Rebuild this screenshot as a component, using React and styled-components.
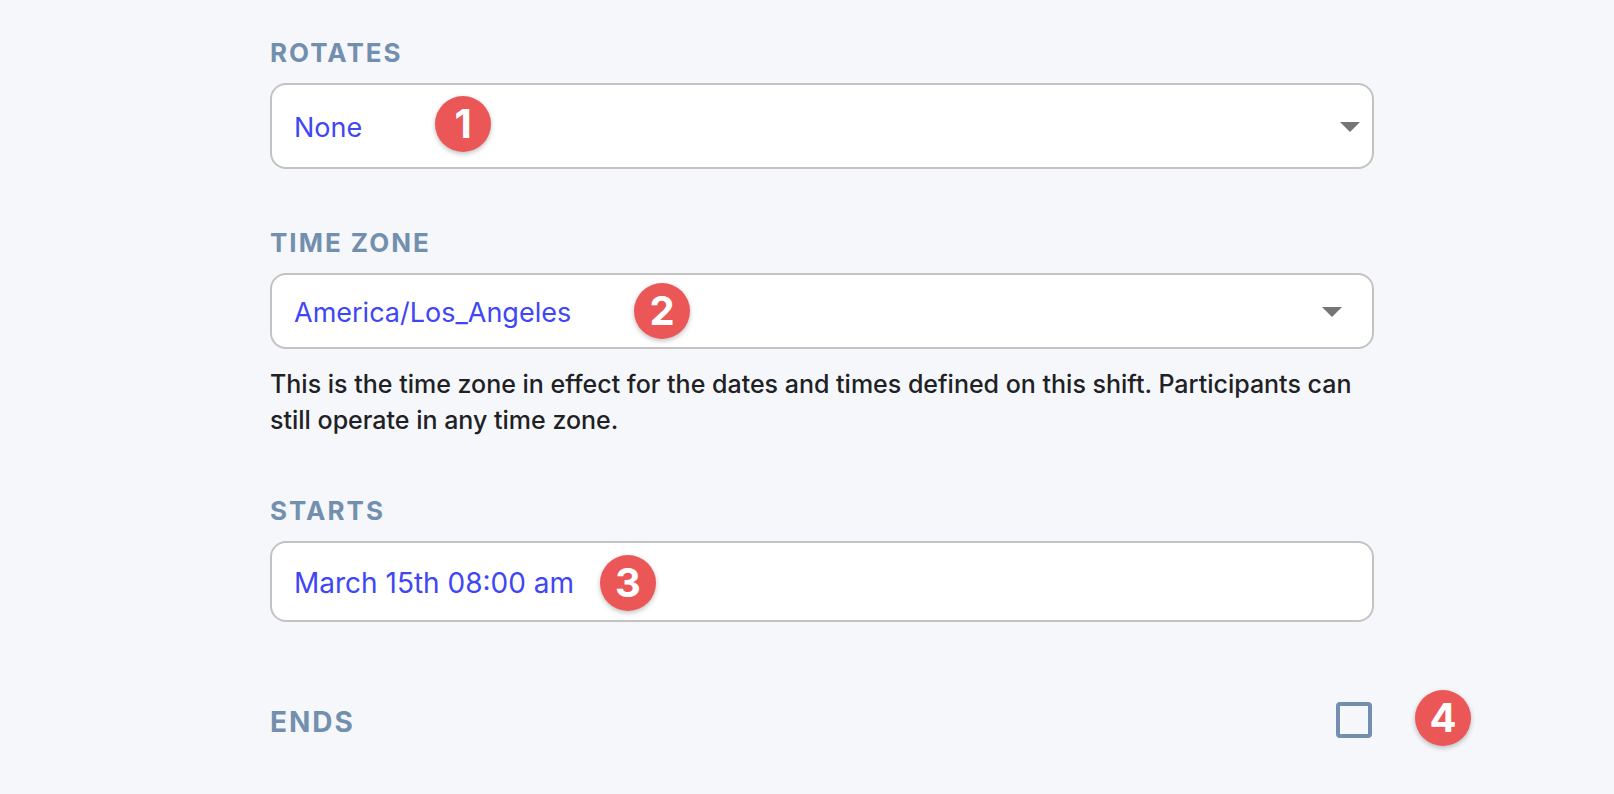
import React from "react";
import styled, { createGlobalStyle, css } from "styled-components";

const GlobalStyle = createGlobalStyle`
  *, *::before, *::after { box-sizing: border-box; }
  body {
    margin: 0;
    background: #f6f7fb;
    font-family: Inter, "Liberation Sans", sans-serif;
  }
`;

const Form = styled.form`
  display: flex;
  flex-direction: column;
  gap: 58px;
  padding: 37px 240px 56px 270px;
`;

const Field = styled.div`
  display: flex;
  flex-direction: column;
`;

const Label = styled.label`
  margin-bottom: ${(p) => (p.$inline ? "0" : "14px")};
  padding-top: ${(p) => (p.$inline ? "4px" : "0")};
  color: #738fae;
  font-size: ${(p) => (p.$inline ? "28px" : "26px")};
  font-weight: 700;
  line-height: 32px;
  letter-spacing: 2px;
  text-transform: uppercase;
`;

const Control = styled.div`
  position: relative;
  display: flex;
  align-items: center;
  height: ${(p) => p.$height}px;
`;

const inputStyles = css`
  appearance: none;
  width: 100%;
  height: 100%;
  margin: 0;
  padding: 2px 22px 0;
  border: 2px solid #c3c3c3;
  border-radius: 16px;
  background: #fff;
  color: #3f46f5;
  font-family: inherit;
  font-weight: 400;
  outline: none;
`;

const Select = styled.select`
  ${inputStyles}
  font-size: 27px;
`;

const TextInput = styled.input`
  ${inputStyles}
  font-size: 28px;
`;

const Arrow = styled.svg`
  position: absolute;
  top: 50%;
  right: ${(p) => p.$right}px;
  width: 20px;
  height: 10px;
  margin-top: -4px;
  fill: #757575;
  pointer-events: none;
`;

const Help = styled.p`
  margin: 17px 0 -1px;
  color: #202124;
  font-size: 25px;
  font-weight: 500;
  line-height: 36px;
`;

const ToggleRow = styled.div`
  position: relative;
  display: flex;
  align-items: center;
  justify-content: space-between;
  margin-top: 22px;
  padding-right: 2px;
`;

const Checkbox = styled.input`
  appearance: none;
  width: 36px;
  height: 36px;
  margin: 0;
  border: 4px solid #738fae;
  border-radius: 4px;
  background: transparent;

  &:checked {
    background: #738fae;
  }
`;

const Badge = styled.span`
  position: absolute;
  top: ${(p) => p.$top}px;
  left: ${(p) => p.$left};
  width: 56px;
  height: 56px;
  border-radius: 50%;
  background: #eb5757;
  box-shadow: 0 2px 5px rgba(0, 0, 0, 0.25);
  color: #fff;
  font-size: 40px;
  font-weight: 700;
  line-height: 55px;
  text-align: center;
  pointer-events: none;
`;

export default function App() {
  return (
    <>
      <GlobalStyle />
      <Form>
        <Field>
          <Label htmlFor="rotates">Rotates</Label>
          <Control $height={86}>
            <Select id="rotates" defaultValue="None">
              <option>None</option>
            </Select>
            <Arrow $right={14} viewBox="0 0 20 10" aria-hidden="true">
              <path d="M0 0h20L10 10z" />
            </Arrow>
            <Badge $top={13} $left="165px">1</Badge>
          </Control>
        </Field>

        <Field>
          <Label htmlFor="timezone">Time zone</Label>
          <Control $height={76}>
            <Select id="timezone" defaultValue="America/Los_Angeles" aria-describedby="timezone-help">
              <option>America/Los_Angeles</option>
            </Select>
            <Arrow $right={32} viewBox="0 0 20 10" aria-hidden="true">
              <path d="M0 0h20L10 10z" />
            </Arrow>
            <Badge $top={10} $left="364px">2</Badge>
          </Control>
          <Help id="timezone-help">
            This is the time zone in effect for the dates and times defined on this shift.
            Participants can still operate in any time zone.
          </Help>
        </Field>

        <Field>
          <Label htmlFor="starts">Starts</Label>
          <Control $height={81}>
            <TextInput id="starts" type="text" defaultValue="March 15th 08:00 am" />
            <Badge $top={14} $left="330px">3</Badge>
          </Control>
        </Field>

        <ToggleRow>
          <Label $inline htmlFor="ends">Ends</Label>
          <Checkbox id="ends" type="checkbox" />
          <Badge $top={-12} $left="calc(100% + 41px)">4</Badge>
        </ToggleRow>
      </Form>
    </>
  );
}
